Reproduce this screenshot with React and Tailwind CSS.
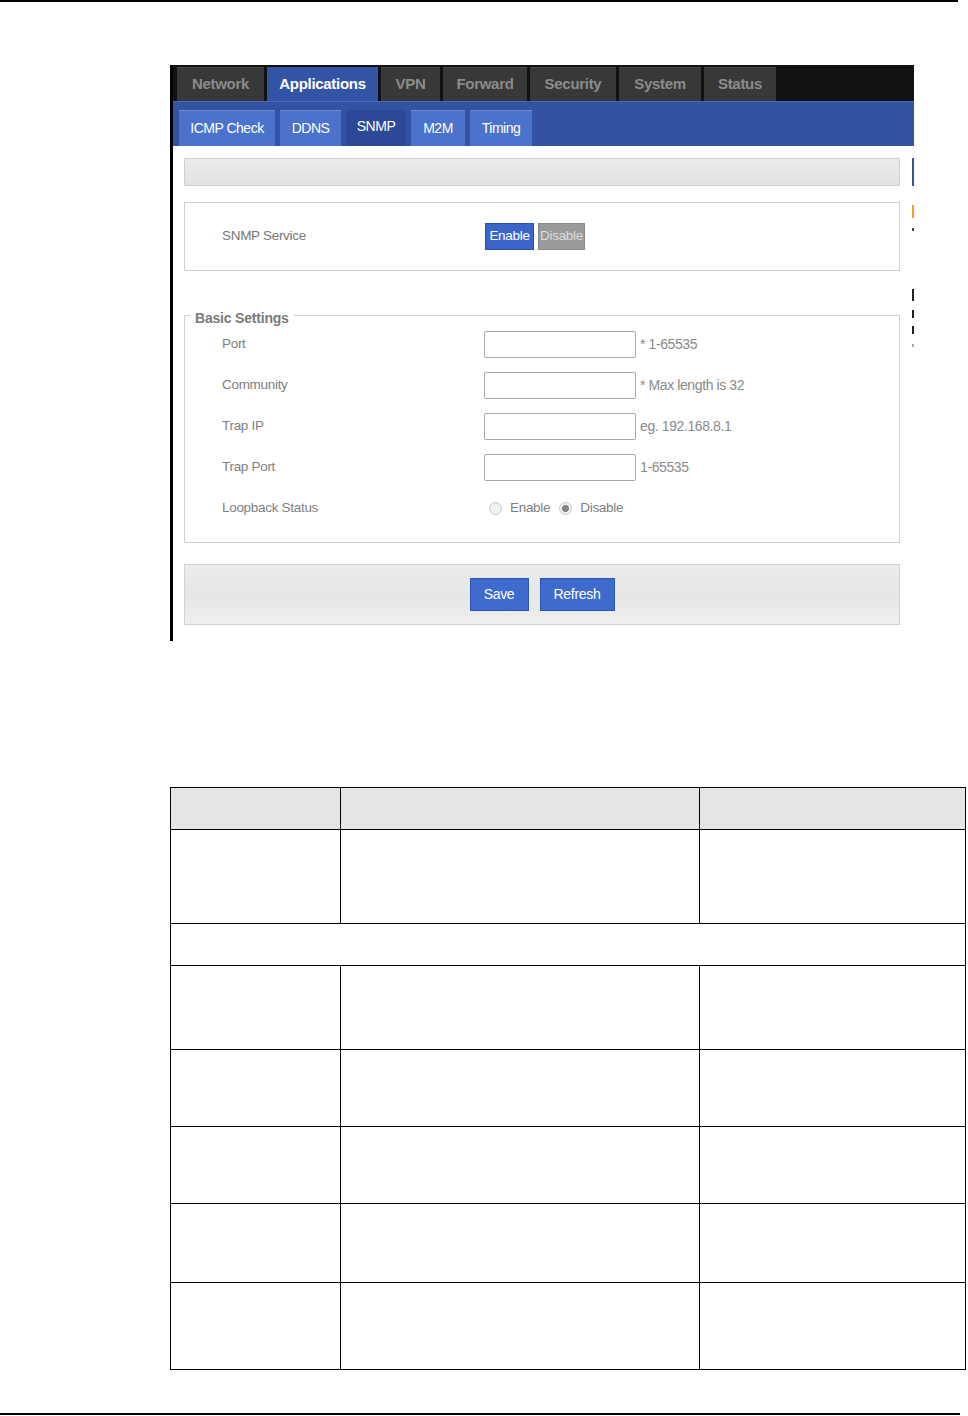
const topTabs = [
  { label: 'Network', w: 'w-[87px]' },
  { label: 'Applications', w: 'w-[111px]', active: true },
  { label: 'VPN', w: 'w-[59px]' },
  { label: 'Forward', w: 'w-[84px]' },
  { label: 'Security', w: 'w-[86px]' },
  { label: 'System', w: 'w-[82px]' },
  { label: 'Status', w: 'w-[72px]' },
];

const subTabs = [
  { label: 'ICMP Check', w: 'w-[96px]' },
  { label: 'DDNS', w: 'w-[61px]' },
  { label: 'SNMP', w: 'w-[60px]', active: true },
  { label: 'M2M', w: 'w-[54px]' },
  { label: 'Timing', w: 'w-[62px]' },
];

const fields = [
  { label: 'Port', hint: '* 1-65535' },
  { label: 'Community', hint: '* Max length is 32' },
  { label: 'Trap IP', hint: 'eg. 192.168.8.1' },
  { label: 'Trap Port', hint: '1-65535' },
];

const rowHeights = ['h-[84px]', 'h-[77px]', 'h-[77px]', 'h-[79px]', 'h-[87px]'];

function Radio({ checked }) {
  return (
    <span className="w-[13px] h-[13px] rounded-full border border-[#c8c8c8] bg-[#f0f0f0] flex items-center justify-center">
      {checked && <span className="w-[7px] h-[7px] rounded-full bg-[#8a8a8a] border border-[#666]" />}
    </span>
  );
}

function Screenshot() {
  return (
    <div className="ml-[170px] w-[744px] border-l-[3px] border-black flex flex-col font-['Liberation_Sans',sans-serif]">
      <div className="h-[36px] bg-[#121212] flex items-end gap-[3px] pl-[4px]">
        {topTabs.map(t => (
          <div
            key={t.label}
            className={`${t.w} h-[34px] flex items-center justify-center text-[15px] font-bold tracking-[-0.3px] ${t.active ? 'bg-[#3353a6] text-white' : 'bg-[#383838] text-[#8c8c8c] border-t border-[#4a4a4a]'}`}
          >
            {t.label}
          </div>
        ))}
      </div>
      <div className="h-[45px] bg-[#3452a2] border-t border-[#4a68b8] flex items-end gap-[5px] pl-[6px]">
        {subTabs.map(t => (
          <div
            key={t.label}
            className={`${t.w} h-[36px] flex items-center justify-center text-[14px] tracking-[-0.5px] text-white ${t.active ? 'bg-[#2c4896] pb-[3px]' : 'bg-[#4b73cb] border-t border-[#6a8cd8]'}`}
          >
            {t.label}
          </div>
        ))}
      </div>
      <div className="h-[495px] bg-white flex">
        <div className="w-[727px] pl-[11px] flex flex-col">
          <div className="mt-[12px] h-[28px] border border-[#cfcfcf] bg-gradient-to-b from-[#ececec] to-[#e2e2e2]" />
          <div className="mt-[16px] h-[69px] border border-[#cfcfcf] flex items-center text-[13.5px] tracking-[-0.3px] text-[#777]">
            <span className="ml-[37px] w-[263px]">SNMP Service</span>
            <span className="w-[49px] h-[27px] flex items-center justify-center bg-[#3a66cc] text-white border border-[#2c52a8]">Enable</span>
            <span className="ml-[4px] w-[47px] h-[27px] flex items-center justify-center bg-[#9a9a9a] text-[#dcdcdc] border border-[#888]">Disable</span>
          </div>
          <fieldset className="mt-[35px] border border-[#cfcfcf] pb-[13px]">
            <legend className="ml-[5px] px-[5px] text-[14px] leading-[18px] font-bold text-[#7a7a7a] tracking-[-0.2px]">
              <span className="relative top-[3px]">Basic Settings</span>
            </legend>
            {fields.map(f => (
              <div key={f.label} className="h-[41px] flex items-center text-[13.5px] tracking-[-0.3px] text-[#808080]">
                <span className="ml-[37px] w-[262px]">{f.label}</span>
                <span className="w-[152px] h-[27px] border border-[#a8a8a8] rounded-[2px] bg-white" />
                <span className="ml-[4px] text-[14px] tracking-[-0.4px] text-[#8a8a8a]">{f.hint}</span>
              </div>
            ))}
            <div className="h-[41px] flex items-center text-[13.5px] tracking-[-0.3px] text-[#808080]">
              <span className="ml-[37px] w-[267px]">Loopback Status</span>
              <Radio />
              <span className="ml-[8px]">Enable</span>
              <span className="ml-[9px]"><Radio checked /></span>
              <span className="ml-[8px]">Disable</span>
            </div>
          </fieldset>
          <div className="mt-[21px] h-[61px] border border-[#d2d2d2] bg-gradient-to-b from-[#ececec] via-[#e6e6e6] to-[#efefef] flex items-center justify-center gap-[11px] text-[14px] tracking-[-0.3px] text-white">
            <span className="w-[59px] h-[33px] flex items-center justify-center bg-[#3e6bcd] border border-[#2d56b0]">Save</span>
            <span className="w-[75px] h-[33px] flex items-center justify-center bg-[#3e6bcd] border border-[#2d56b0]">Refresh</span>
          </div>
        </div>
        <div className="w-[14px] flex justify-end">
          <div className="w-[2px] flex flex-col">
            <span className="mt-[12px] h-[28px] bg-[#3452a2]" />
            <span className="mt-[19px] h-[13px] bg-[#f0a030]" />
            <span className="mt-[10px] h-[3px] bg-[#444]" />
            <span className="mt-[58px] h-[12px] bg-[#222]" />
            <span className="mt-[9px] h-[8px] bg-[#222]" />
            <span className="mt-[8px] h-[8px] bg-[#222]" />
            <span className="mt-[10px] h-[3px] bg-[#aaa]" />
          </div>
        </div>
      </div>
    </div>
  );
}

export default function App() {
  return (
    <div className="w-[968px] h-[1416px] bg-white flex flex-col">
      <div className="w-[958px] h-[2px] bg-black" />
      <div className="mt-[63px]">
        <Screenshot />
      </div>
      <table className="mt-[146px] ml-[170px] w-[795px] border-collapse table-fixed">
        <colgroup>
          <col className="w-[170px]" />
          <col className="w-[359px]" />
          <col className="w-[266px]" />
        </colgroup>
        <tbody>
          <tr className="h-[42px] bg-[#e5e5e5]">
            <td className="border border-black" />
            <td className="border border-black" />
            <td className="border border-black" />
          </tr>
          <tr className="h-[94px]">
            <td className="border border-black" />
            <td className="border border-black" />
            <td className="border border-black" />
          </tr>
          <tr className="h-[42px]">
            <td colSpan={3} className="border border-black" />
          </tr>
          {rowHeights.map((h, i) => (
            <tr key={i} className={h}>
              <td className="border border-black" />
              <td className="border border-black" />
              <td className="border border-black" />
            </tr>
          ))}
        </tbody>
      </table>
      <div className="mt-auto mb-[1px] w-[960px] h-[2px] bg-black" />
    </div>
  );
}
